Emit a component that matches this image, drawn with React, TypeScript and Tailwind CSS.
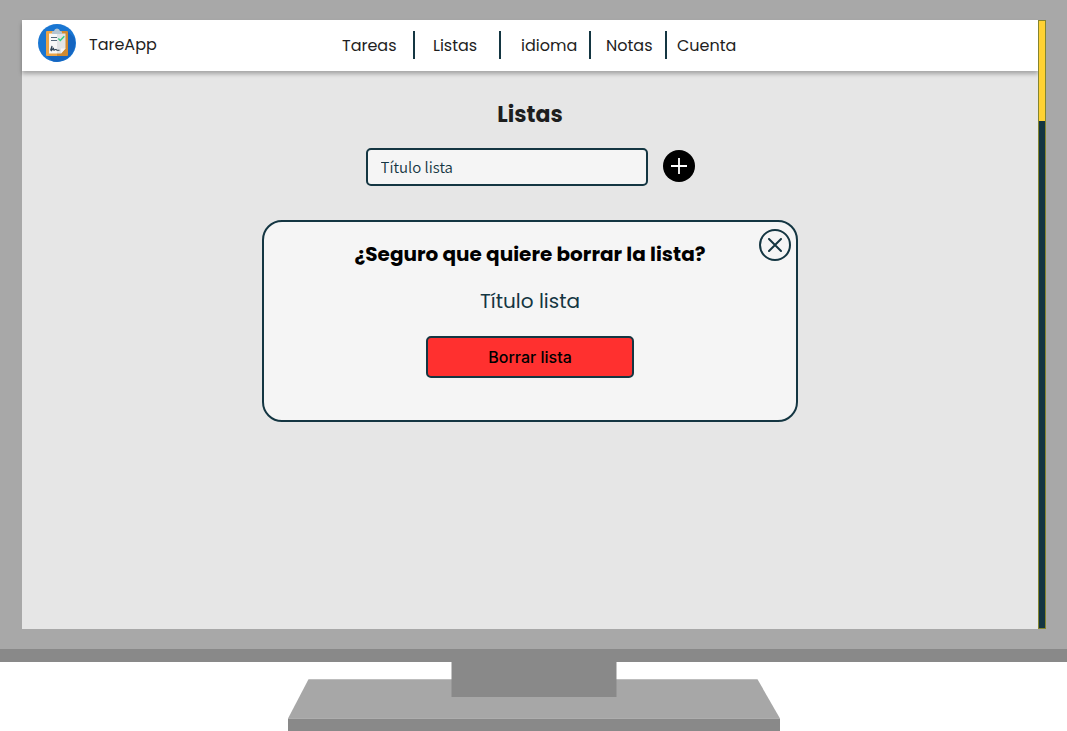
import React from "react";

const navItems = [
  { label: "Tareas", box: "w-[73px] border-r-2" },
  { label: "Listas", box: "w-[86px] border-r-2 pl-[18px]" },
  { label: "idioma", box: "w-[90px] border-r-2 pl-5" },
  { label: "Notas", box: "w-[76px] border-r-2 pl-[15px]" },
  { label: "Cuenta", box: "pl-[10px]" },
];

function Logo() {
  return (
    <svg viewBox="0 0 38 38" className="size-[38px] shrink-0" aria-hidden="true">
      <circle cx="19" cy="19" r="19" fill="#1976d2" />
      <path d="M30 7.500 36.500 14A19 19 0 0 1 15 37.600L9 32Z" fill="#1565c0" />
      <path d="M9 7h10v25H9a1 1 0 0 1-1-1V8a1 1 0 0 1 1-1Z" fill="#eba446" />
      <path d="M19 7h10a1 1 0 0 1 1 1v23a1 1 0 0 1-1 1H19Z" fill="#d18a30" />
      <path d="M11 9.500h8v20h-8Z" fill="#f7f7f7" />
      <path d="M19 9.500h8.500v15l-4.500 5h-4Z" fill="#e2e4e6" />
      <path d="M27.500 24.500 23 29.500v-5Z" fill="#f7f7f7" />
      <path d="M14 10V8q0-1 2-1 .5-2.500 3-2.500t3 2.500q2 0 2 1v2Z" fill="#b6c5d1" />
      <path d="M13 13.500h6M13 16.500h6" stroke="#53687b" strokeWidth="1" />
      <path d="m20.300 14.500 2 2 4-4.200" fill="none" stroke="#35d07f" strokeWidth="1.500" />
      <path d="M12.500 26.500 14 22l-.3 4.300 1.800-2 .5 2 2-1 1 1h2.500" fill="none" stroke="#2f4254" strokeWidth="1.100" />
    </svg>
  );
}

function Stand() {
  return (
    <svg viewBox="0 0 492 69" className="mx-auto block w-[492px] max-w-full" aria-hidden="true">
      <path d="M20.500 17.300H469.500L492 56.500H0Z" fill="#a7a7a7" />
      <path d="M0 56.500H492V69H0Z" fill="#898989" />
      <path d="M163.500 0h165v35h-165Z" fill="#898989" />
    </svg>
  );
}

export default function App() {
  return (
    <div className="min-h-screen bg-white font-[Poppins,Inter,sans-serif] text-[#1e1e1e]">
      <div className="border-b-[13px] border-[#898989] bg-[#a8a8a8] pt-5 pr-[21px] pb-5 pl-[22px]">
        <div className="flex bg-[#e6e6e6]">
          <div className="min-w-0 flex-1 pb-[207px]">
            <header className="flex h-[51px] items-start bg-white pt-1 pl-4 shadow-[0_3px_4px_rgba(0,0,0,0.28)]">
              <a href="#inicio" className="flex w-[304px] items-center gap-[13px]">
                <Logo />
                <span className="pt-1">TareApp</span>
              </a>
              <nav aria-label="Principal" className="pt-[7px]">
                <ul className="flex">
                  {navItems.map((item) => (
                    <li key={item.label} className={"h-7 border-[#143642] leading-[30px] " + item.box}>
                      <a href={"#" + item.label.toLowerCase()}>{item.label}</a>
                    </li>
                  ))}
                </ul>
              </nav>
            </header>

            <main className="flex flex-col items-center pt-7">
              <h1 className="text-[22px] leading-8 font-bold">Listas</h1>

              <form className="mt-[17px] flex items-center gap-[15px]" onSubmit={(e) => e.preventDefault()}>
                <input
                  type="text"
                  aria-label="Título lista"
                  placeholder="Título lista"
                  className="h-[38px] w-[282px] rounded-[5px] border-2 border-[#143642] bg-[#f5f5f5] px-[13px] pb-0.5 font-['Noto_Sans_CJK_JP',sans-serif] text-[15px] font-[350] text-[#143642] placeholder:text-[#143642]"
                />
                <button
                  type="submit"
                  aria-label="Añadir lista"
                  className="mb-[2px] flex size-8 items-center justify-center rounded-full bg-black"
                >
                  <svg viewBox="0 0 16 16" className="size-4" stroke="white" strokeWidth="1.800">
                    <path d="M8 0v16M0 8h16" />
                  </svg>
                </button>
              </form>

              <section
                role="dialog"
                aria-labelledby="confirm-title"
                className="relative mt-[34px] flex w-[536px] max-w-full flex-col items-center rounded-[20px] border-2 border-[#143642] bg-[#f5f5f5] pt-[17px] pb-[42px]"
              >
                <button
                  type="button"
                  aria-label="Cerrar"
                  className="absolute top-[7px] right-[5px] flex size-8 items-center justify-center rounded-full border-2 border-[#143642]"
                >
                  <svg viewBox="0 0 14 14" className="size-3.5" stroke="#143642" strokeWidth="2" strokeLinecap="round">
                    <path d="m1 1 12 12M13 1 1 13" />
                  </svg>
                </button>
                <h2 id="confirm-title" className="text-xl leading-[30px] font-bold text-black">
                  ¿Seguro que quiere borrar la lista?
                </h2>
                <p className="mt-[17px] text-xl leading-[30px] text-[#143642]">Título lista</p>
                <button
                  type="button"
                  className="mt-5 h-[42px] w-52 rounded-[5px] border-2 border-[#143642] bg-[#ff302f] font-[Inter,sans-serif] font-medium text-black"
                >
                  Borrar lista
                </button>
              </section>
            </main>
          </div>

          <div className="z-10 w-2 border border-[#85852f] bg-[#143642]">
            <div className="h-[100px] bg-[#ffd233]" />
          </div>
        </div>
      </div>
      <Stand />
    </div>
  );
}
